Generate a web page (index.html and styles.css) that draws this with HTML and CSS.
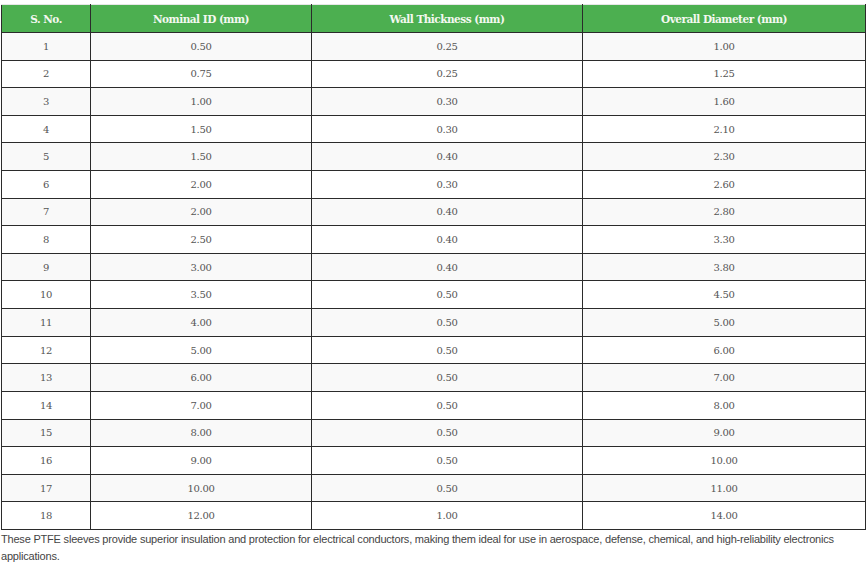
FILE: index.html
```html
<!DOCTYPE html>
<html>
<head>
<meta charset="utf-8">
<link rel="stylesheet" href="styles.css">
</head>
<body>
<div class="page">
<table class="spec">
<colgroup>
<col class="c1"><col class="c2"><col class="c3"><col class="c4">
</colgroup>
<thead>
<tr><th>S. No.</th><th>Nominal ID (mm)</th><th>Wall Thickness (mm)</th><th>Overall Diameter (mm)</th></tr>
</thead>
<tbody>
<tr><td>1</td><td>0.50</td><td>0.25</td><td>1.00</td></tr>
<tr><td>2</td><td>0.75</td><td>0.25</td><td>1.25</td></tr>
<tr><td>3</td><td>1.00</td><td>0.30</td><td>1.60</td></tr>
<tr><td>4</td><td>1.50</td><td>0.30</td><td>2.10</td></tr>
<tr><td>5</td><td>1.50</td><td>0.40</td><td>2.30</td></tr>
<tr><td>6</td><td>2.00</td><td>0.30</td><td>2.60</td></tr>
<tr><td>7</td><td>2.00</td><td>0.40</td><td>2.80</td></tr>
<tr><td>8</td><td>2.50</td><td>0.40</td><td>3.30</td></tr>
<tr><td>9</td><td>3.00</td><td>0.40</td><td>3.80</td></tr>
<tr><td>10</td><td>3.50</td><td>0.50</td><td>4.50</td></tr>
<tr><td>11</td><td>4.00</td><td>0.50</td><td>5.00</td></tr>
<tr><td>12</td><td>5.00</td><td>0.50</td><td>6.00</td></tr>
<tr><td>13</td><td>6.00</td><td>0.50</td><td>7.00</td></tr>
<tr><td>14</td><td>7.00</td><td>0.50</td><td>8.00</td></tr>
<tr><td>15</td><td>8.00</td><td>0.50</td><td>9.00</td></tr>
<tr><td>16</td><td>9.00</td><td>0.50</td><td>10.00</td></tr>
<tr><td>17</td><td>10.00</td><td>0.50</td><td>11.00</td></tr>
<tr><td>18</td><td>12.00</td><td>1.00</td><td>14.00</td></tr>
</tbody>
</table>
<p class="note">These PTFE sleeves provide superior insulation and protection for electrical conductors, making them ideal for use in aerospace, defense, chemical, and high-reliability electronics applications.</p>
</div>
</body>
</html>
```
FILE: styles.css
```css
html, body {
  margin: 0;
  padding: 0;
  background: #ffffff;
}
.page {
  padding: 4px 2px 0 1px;
}
.spec {
  width: 864px;
  border-collapse: collapse;
  table-layout: fixed;
  font-family: "DejaVu Serif", "Liberation Serif", serif;
}
.c1 { width: 89px; }
.c2 { width: 221px; }
.c3 { width: 271px; }
.c4 { width: 283px; }
.spec th {
  background: #4caf50;
  color: #f4f8f0;
  font-size: 10.5px;
  font-weight: bold;
  letter-spacing: -0.5px;
  height: 27px;
  padding: 0;
  border: 1px solid #2b2b2b;
  border-top: 1px solid #e6e6e6;
  text-align: center;
}
.spec td {
  height: 26.62px;
  padding: 0;
  border: 1px solid #2b2b2b;
  text-align: center;
  font-size: 10px;
  color: #555555;
  letter-spacing: -0.3px;
}
.spec tbody tr:nth-child(odd) td {
  background: #f9f9f9;
}
.note {
  margin: 0;
  padding-top: 1px;
  font-family: "Liberation Sans", Arial, sans-serif;
  font-size: 11px;
  letter-spacing: -0.2px;
  line-height: 17px;
  color: #444444;
}
```
